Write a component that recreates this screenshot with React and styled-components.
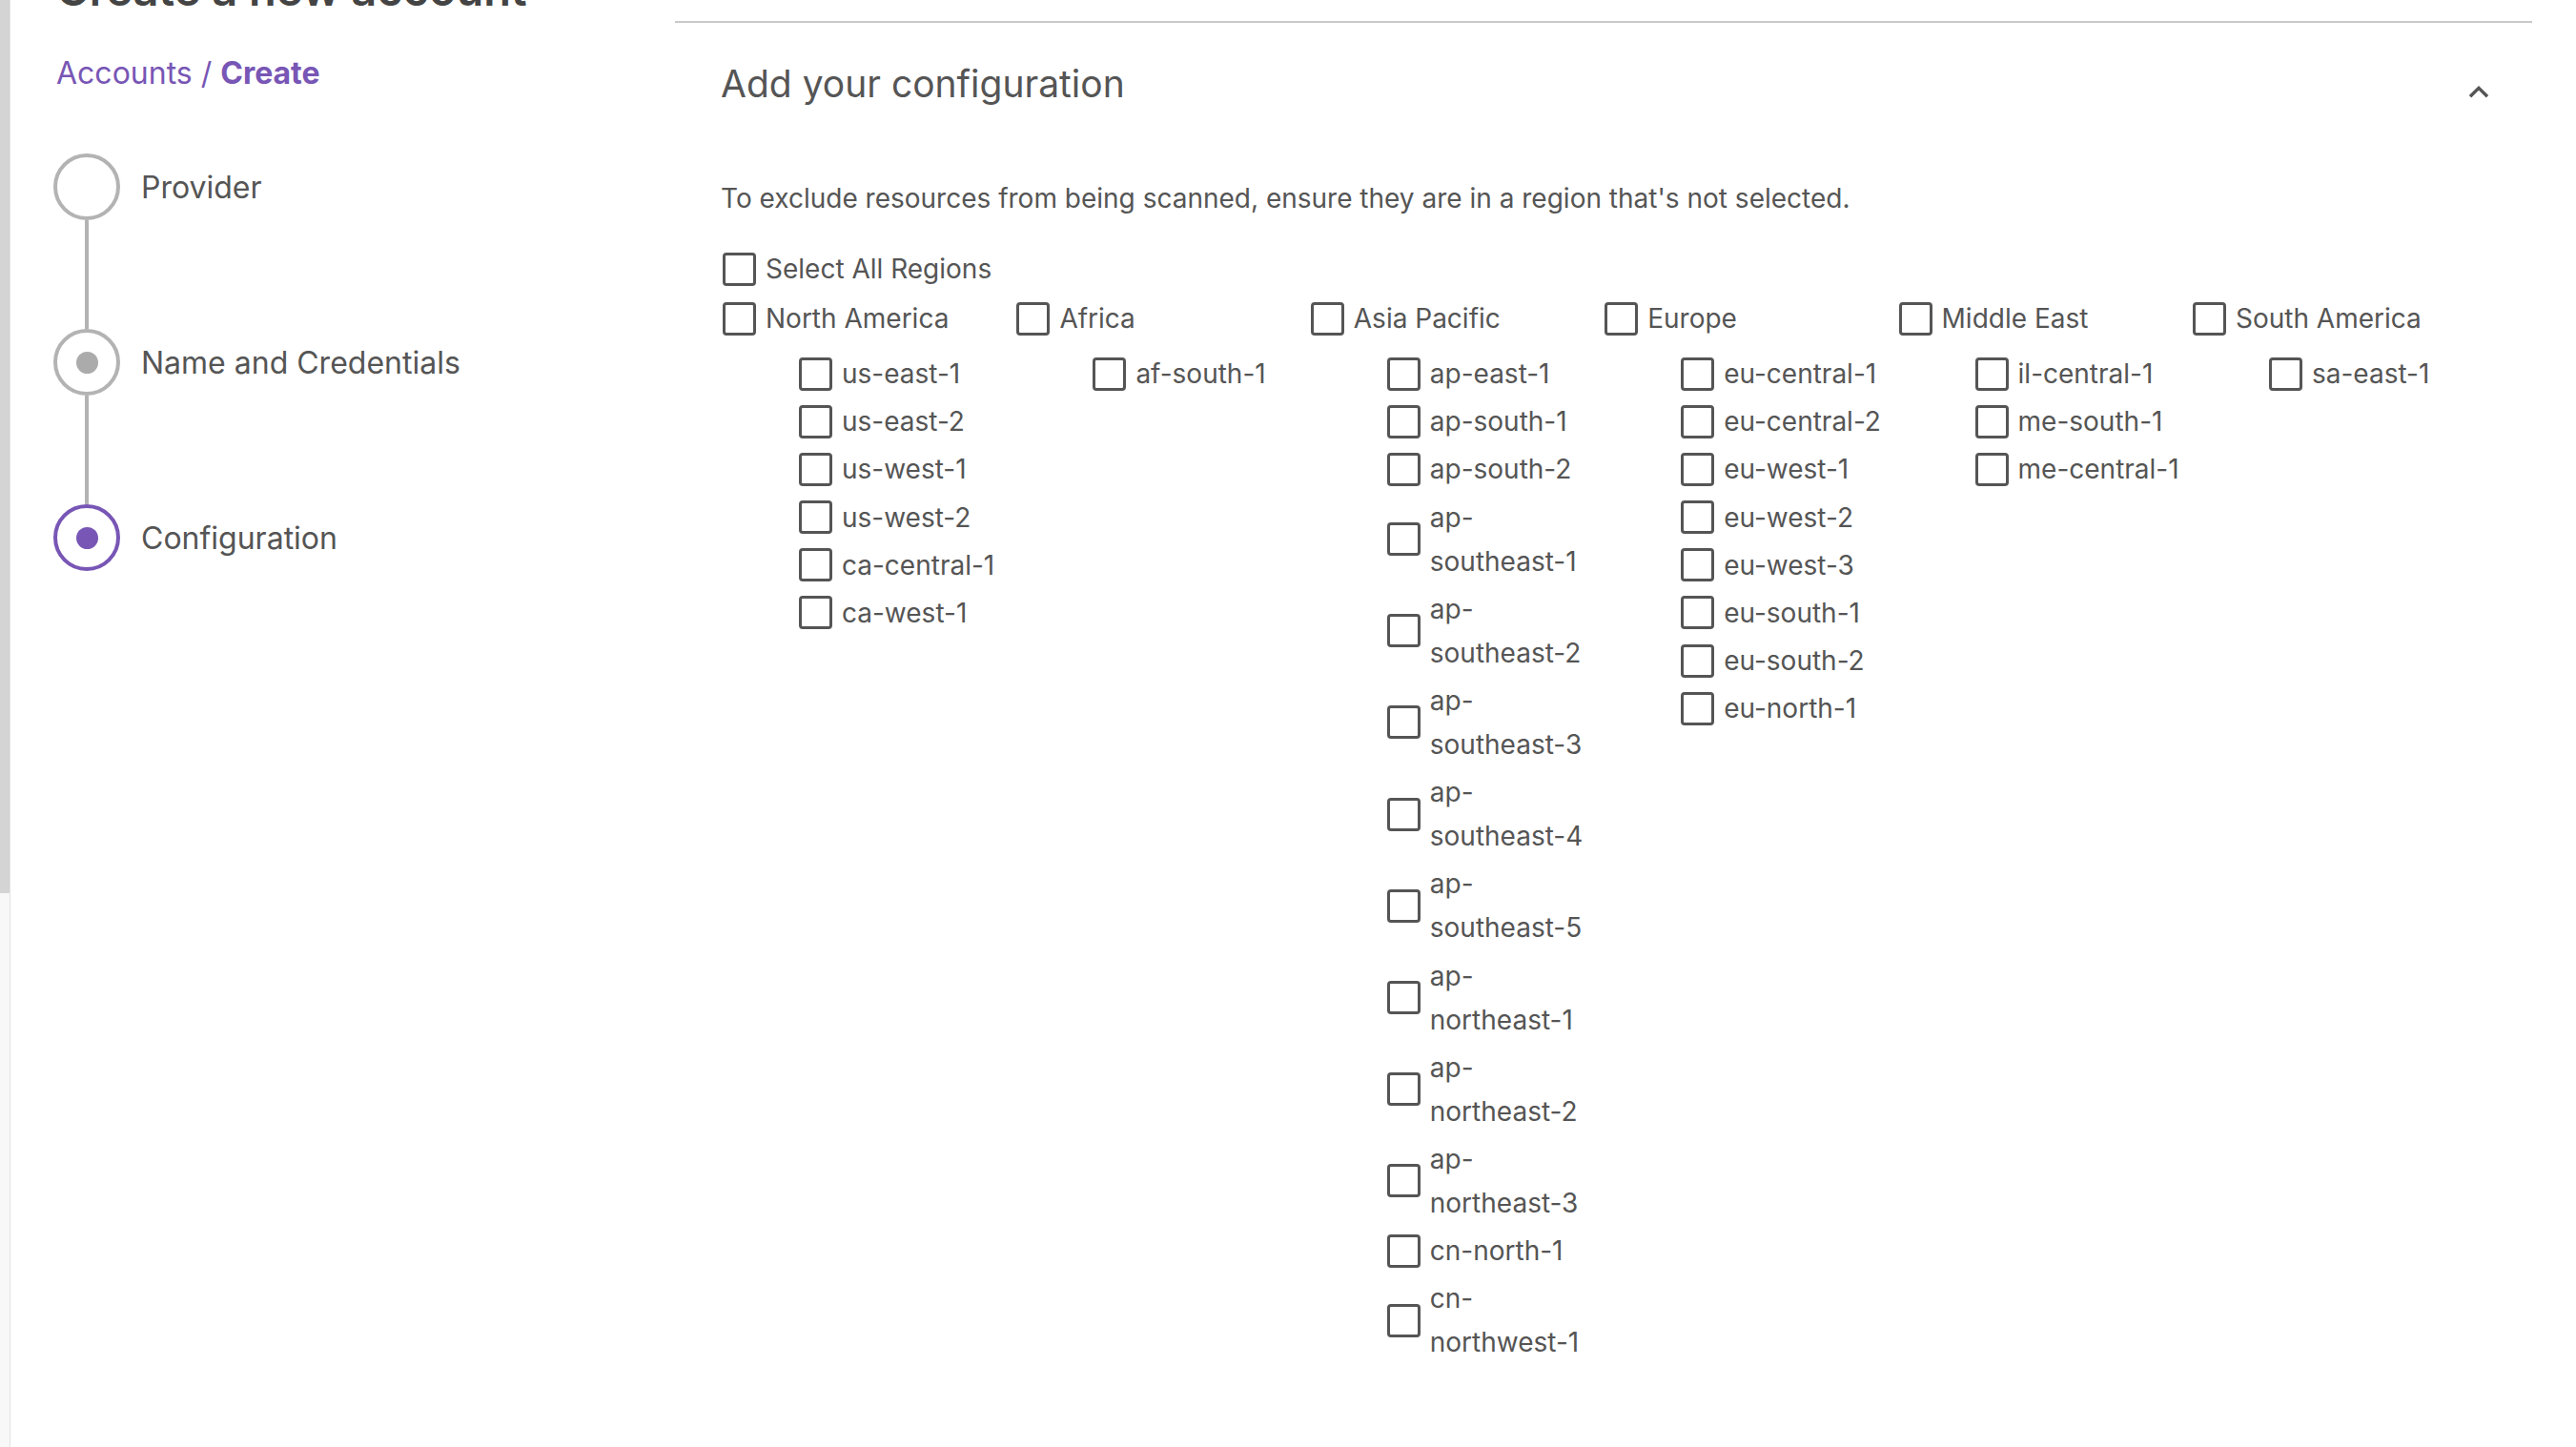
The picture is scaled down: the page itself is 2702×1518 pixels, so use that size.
import React from 'react';
import styled, { createGlobalStyle } from 'styled-components';

const GlobalStyle = createGlobalStyle`
  html, body {
    margin: 0;
    padding: 0;
    background: #fff;
  }
  body {
    font-family: Inter, "Open Sans", sans-serif;
    color: #555;
  }
  * {
    box-sizing: border-box;
  }
`;

const Shell = styled.div`
  display: flex;
  height: 100vh;
  overflow: hidden;
`;

const ScrollTrack = styled.div`
  width: 11px;
  flex-shrink: 0;
  background: #f8f8f8;
  border-right: 1px solid #e2e2e2;
`;

const ScrollThumb = styled.div`
  height: 937px;
  background: #d4d4d4;
`;

const Main = styled.main`
  flex: 1;
  min-width: 0;
  display: flex;
  padding-right: 46px;
`;

const Sidebar = styled.aside`
  width: 697px;
  flex-shrink: 0;
  padding-left: 48px;
  display: flex;
  flex-direction: column;
`;

const Title = styled.h1`
  margin: -39px 0 0;
  font-size: 47px;
  line-height: 56px;
  font-weight: 600;
  color: #444;
  white-space: nowrap;
`;

const Breadcrumb = styled.nav`
  margin-top: 40px;
  font-size: 32px;
  line-height: 40px;
  color: #7856b5;
`;

const Crumb = styled.span`
  font-weight: ${(p) => (p.$current ? 700 : 400)};
`;

const Stepper = styled.ol`
  list-style: none;
  margin: 64px 0 0 -3px;
  padding: 0;
`;

const Step = styled.li`
  display: flex;
  align-items: center;
  gap: 22px;
`;

const StepCircle = styled.span`
  width: 70px;
  height: 70px;
  flex-shrink: 0;
  border-radius: 50%;
  border: 4px solid ${(p) => (p.$active ? '#7856b5' : '#b3b3b3')};
  display: flex;
  align-items: center;
  justify-content: center;
`;

const StepDot = styled.span`
  width: 23px;
  height: 23px;
  border-radius: 50%;
  background: ${(p) => (p.$active ? '#7856b5' : '#ababab')};
`;

const StepLabel = styled.span`
  font-size: 32px;
  color: #555;
`;

const Connector = styled.li`
  width: 4px;
  height: 114px;
  margin-left: 33px;
  background: #b3b3b3;
`;

const Panel = styled.section`
  flex: 1;
  min-width: 0;
  margin-top: 22px;
  border-top: 2px solid #c8c8c8;
  padding: 41px 45px 0 48px;
`;

const PanelHeader = styled.div`
  display: flex;
  justify-content: space-between;
  align-items: flex-start;
`;

const PanelTitle = styled.h2`
  margin: 0;
  font-size: 39px;
  line-height: 45px;
  font-weight: 400;
  color: #555;
`;

const Collapse = styled.button`
  margin-top: 25px;
  padding: 0;
  border: 0;
  background: none;
  color: #555;
  display: flex;
  cursor: pointer;
`;

const Hint = styled.p`
  margin: 78px 0 0;
  font-size: 28px;
  line-height: 40px;
  color: #555;
`;

const RegionForm = styled.div`
  margin-top: 31px;
  padding-left: 2px;
`;

const Option = styled.label`
  display: flex;
  align-items: center;
  gap: 10px;
  min-height: 46px;
  font-size: 28px;
  line-height: 46px;
  color: #555;
  cursor: pointer;
`;

const OptionText = styled.span`
  flex: 1;
  min-width: 0;
`;

const Box = styled.input.attrs({ type: 'checkbox' })`
  appearance: none;
  margin: 0;
  width: 35px;
  height: 35px;
  flex-shrink: 0;
  border: 3.5px solid #555;
  border-radius: 4px;
  background: #fff;
`;

const GroupGrid = styled.div`
  display: grid;
  grid-template-columns: repeat(6, 308.4px);
  margin-top: 6px;
`;

const Group = styled.div`
  display: flex;
  flex-direction: column;
`;

const SubList = styled.div`
  display: flex;
  flex-direction: column;
  gap: 4.2px;
  margin-top: 12px;
  padding-left: 80px;

  ${OptionText} {
    flex: 0 1 178px;
  }
`;

const regionGroups = [
  { name: 'North America', regions: ['us-east-1', 'us-east-2', 'us-west-1', 'us-west-2', 'ca-central-1', 'ca-west-1'] },
  { name: 'Africa', regions: ['af-south-1'] },
  {
    name: 'Asia Pacific',
    regions: [
      'ap-east-1', 'ap-south-1', 'ap-south-2', 'ap-southeast-1', 'ap-southeast-2', 'ap-southeast-3',
      'ap-southeast-4', 'ap-southeast-5', 'ap-northeast-1', 'ap-northeast-2', 'ap-northeast-3',
      'cn-north-1', 'cn-northwest-1',
    ],
  },
  { name: 'Europe', regions: ['eu-central-1', 'eu-central-2', 'eu-west-1', 'eu-west-2', 'eu-west-3', 'eu-south-1', 'eu-south-2', 'eu-north-1'] },
  { name: 'Middle East', regions: ['il-central-1', 'me-south-1', 'me-central-1'] },
  { name: 'South America', regions: ['sa-east-1'] },
];

const steps = [
  { label: 'Provider', state: 'todo' },
  { label: 'Name and Credentials', state: 'done' },
  { label: 'Configuration', state: 'active' },
];

function ChevronUp() {
  return (
    <svg width="22" height="13" viewBox="0 0 22 13">
      <polyline points="2,11.2 11,2.4 20,11.2" fill="none" stroke="currentColor" strokeWidth="3.4" />
    </svg>
  );
}

export default function App() {
  return (
    <>
      <GlobalStyle />
      <Shell>
        <ScrollTrack>
          <ScrollThumb />
        </ScrollTrack>
        <Main>
          <Sidebar>
            <Title>Create a new account</Title>
            <Breadcrumb>
              <Crumb>Accounts</Crumb> / <Crumb $current>Create</Crumb>
            </Breadcrumb>
            <Stepper>
              {steps.map((s, i) => (
                <React.Fragment key={s.label}>
                  {i > 0 && <Connector aria-hidden />}
                  <Step>
                    <StepCircle $active={s.state === 'active'}>
                      {s.state !== 'todo' && <StepDot $active={s.state === 'active'} />}
                    </StepCircle>
                    <StepLabel>{s.label}</StepLabel>
                  </Step>
                </React.Fragment>
              ))}
            </Stepper>
          </Sidebar>

          <Panel>
            <PanelHeader>
              <PanelTitle>Add your configuration</PanelTitle>
              <Collapse aria-label="Collapse">
                <ChevronUp />
              </Collapse>
            </PanelHeader>
            <Hint>To exclude resources from being scanned, ensure they are in a region that's not selected.</Hint>
            <RegionForm>
              <Option>
                <Box />
                <OptionText>Select All Regions</OptionText>
              </Option>
              <GroupGrid>
                {regionGroups.map((g) => (
                  <Group key={g.name}>
                    <Option>
                      <Box />
                      <OptionText>{g.name}</OptionText>
                    </Option>
                    <SubList>
                      {g.regions.map((r) => (
                        <Option key={r}>
                          <Box />
                          <OptionText>{r}</OptionText>
                        </Option>
                      ))}
                    </SubList>
                  </Group>
                ))}
              </GroupGrid>
            </RegionForm>
          </Panel>
        </Main>
      </Shell>
    </>
  );
}
